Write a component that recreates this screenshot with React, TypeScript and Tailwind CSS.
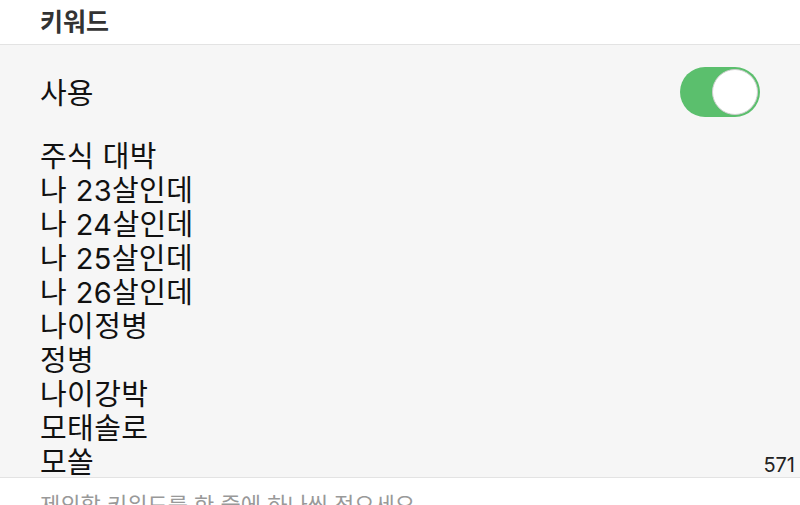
const KEYWORDS = [
  "주식 대박",
  "나 23살인데",
  "나 24살인데",
  "나 25살인데",
  "나 26살인데",
  "나이정병",
  "정병",
  "나이강박",
  "모태솔로",
  "모쏠",
];

function Toggle({ on }: { on: boolean }) {
  return (
    <div
      className={
        on
          ? "flex h-[50px] w-[80px] items-center justify-end rounded-full bg-[#5bbf6d] p-[2px]"
          : "flex h-[50px] w-[80px] items-center justify-start rounded-full bg-[#e5e5e5] p-[2px]"
      }
    >
      <div className="h-[46px] w-[46px] rounded-full border border-[#cfcfcf] bg-white" />
    </div>
  );
}

export default function App() {
  return (
    <div className="flex h-[505px] w-[800px] flex-col overflow-hidden bg-white font-['Inter','Noto_Sans_CJK_KR',sans-serif]">
      <div className="flex h-[45px] shrink-0 items-center border-b border-[#e3e3e3] bg-white pl-[40px]">
        <span className="text-[25px] font-bold leading-none text-[#333]">키워드</span>
      </div>

      <div className="flex h-[433px] shrink-0 flex-col border-b border-[#e3e3e3] bg-[#f6f6f6]">
        <div className="flex items-center justify-between pl-[40px] pr-[40px] pt-[22px]">
          <span className="pt-[2px] text-[29px] leading-none text-[#111]">사용</span>
          <Toggle on />
        </div>
        <div className="flex flex-1 items-end justify-between pl-[40px] pr-[5px] pt-[23px]">
          <div className="flex flex-col text-[29px] leading-[34px] text-[#111]">
            {KEYWORDS.map((k) => (
              <span key={k} className="tracking-[0.4px]">
                {k}
              </span>
            ))}
          </div>
          <span className="pb-[5px] text-[20px] leading-none text-[#222]">571</span>
        </div>
      </div>

      <div className="pl-[40px] pt-[16px]">
        <span className="text-[22px] leading-none text-[#999]">
          제외할 키워드를 한 줄에 하나씩 적으세요.
        </span>
      </div>
    </div>
  );
}
